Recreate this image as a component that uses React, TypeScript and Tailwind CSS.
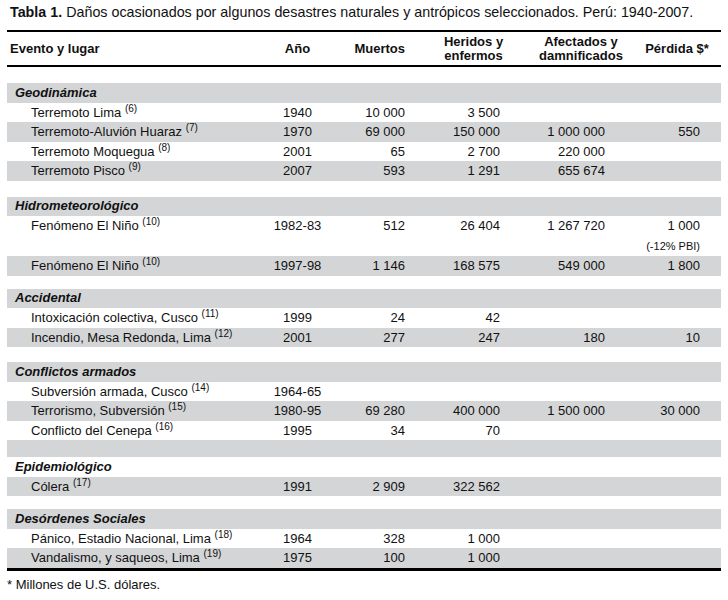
type Row = {
  kind: "section" | "item" | "gap";
  label?: string;
  note?: string;
  year?: string;
  dead?: string;
  hurt?: string;
  affected?: string;
  loss?: string;
  extra?: string;
  gray?: boolean;
  h?: string;
};

const rows: Row[] = [
  { kind: "section", label: "Geodinámica", gray: true },
  { kind: "item", label: "Terremoto Lima", note: "(6)", year: "1940", dead: "10 000", hurt: "3 500" },
  { kind: "item", label: "Terremoto-Aluvión Huaraz", note: "(7)", year: "1970", dead: "69 000", hurt: "150 000", affected: "1 000 000", loss: "550", gray: true },
  { kind: "item", label: "Terremoto Moquegua", note: "(8)", year: "2001", dead: "65", hurt: "2 700", affected: "220 000" },
  { kind: "item", label: "Terremoto Pisco", note: "(9)", year: "2007", dead: "593", hurt: "1 291", affected: "655 674", gray: true },
  { kind: "gap", h: "h-[16px]" },
  { kind: "section", label: "Hidrometeorológico", gray: true },
  { kind: "item", label: "Fenómeno El Niño", note: "(10)", year: "1982-83", dead: "512", hurt: "26 404", affected: "1 267 720", loss: "1 000", extra: "(-12% PBI)", h: "h-[40px]" },
  { kind: "item", label: "Fenómeno El Niño", note: "(10)", year: "1997-98", dead: "1 146", hurt: "168 575", affected: "549 000", loss: "1 800", gray: true },
  { kind: "gap", h: "h-[13px]" },
  { kind: "section", label: "Accidental", gray: true },
  { kind: "item", label: "Intoxicación colectiva, Cusco", note: "(11)", year: "1999", dead: "24", hurt: "42" },
  { kind: "item", label: "Incendio, Mesa Redonda, Lima", note: "(12)", year: "2001", dead: "277", hurt: "247", affected: "180", loss: "10", gray: true },
  { kind: "gap", h: "h-[15px]" },
  { kind: "section", label: "Conflictos armados", gray: true },
  { kind: "item", label: "Subversión armada, Cusco", note: "(14)", year: "1964-65" },
  { kind: "item", label: "Terrorismo, Subversión", note: "(15)", year: "1980-95", dead: "69 280", hurt: "400 000", affected: "1 500 000", loss: "30 000", gray: true },
  { kind: "item", label: "Conflicto del Cenepa", note: "(16)", year: "1995", dead: "34", hurt: "70" },
  { kind: "gap", h: "h-[17px]", gray: true },
  { kind: "section", label: "Epidemiológico" },
  { kind: "item", label: "Cólera", note: "(17)", year: "1991", dead: "2 909", hurt: "322 562", gray: true },
  { kind: "gap", h: "h-[13px]" },
  { kind: "section", label: "Desórdenes Sociales", gray: true },
  { kind: "item", label: "Pánico, Estadio Nacional, Lima", note: "(18)", year: "1964", dead: "328", hurt: "1 000" },
  { kind: "item", label: "Vandalismo, y saqueos, Lima", note: "(19)", year: "1975", dead: "100", hurt: "1 000", gray: true },
];

const cols = "grid grid-cols-[258px_65px_80px_95px_105px_111px]";

function TableRow({ r }: { r: Row }) {
  const bg = r.gray ? "bg-[#d4d5d7]" : "bg-white";
  if (r.kind === "gap") {
    return <div className={`${r.h} ${bg}`} />;
  }
  if (r.kind === "section") {
    return (
      <div className={`h-[19.5px] ${bg} flex items-center pl-[8px] font-bold italic`}>
        {r.label}
      </div>
    );
  }
  return (
    <div className={`${cols} ${r.h ?? "h-[19.5px]"} ${bg} items-start pt-[2px]`}>
      <div className="pl-[24px]">
        {r.label} <sup className="text-[10px] -top-[5px]">{r.note}</sup>
      </div>
      <div className="text-center">{r.year}</div>
      <div className="text-right pr-[5px]">{r.dead}</div>
      <div className="text-right pr-[5px]">{r.hurt}</div>
      <div className="text-right pr-[5px]">{r.affected}</div>
      <div className="text-right pr-[21px]">
        {r.loss}
        {r.extra && <div className="text-[11px] mt-[4px]">{r.extra}</div>}
      </div>
    </div>
  );
}

export default function App() {
  return (
    <div className="w-[728px] h-[600px] bg-white text-[#111] text-[13px] leading-[16px] font-['Liberation_Sans',Arial,sans-serif]">
      <p className="pl-[10px] pt-[4px] text-[14.3px] leading-[17px]">
        <span className="font-bold">Tabla 1.</span> Daños ocasionados por algunos desastres naturales y antrópicos seleccionados. Perú: 1940-2007.
      </p>

      <div className="ml-[7px] w-[714px] mt-[9px]">
        {/* cabecera */}
        <div className="border-t-2 border-b-2 border-black h-[37px] grid grid-cols-[258px_65px_95px_97px_118px_81px] items-center font-bold leading-[14px]">
          <div className="pl-[3px]">Evento y lugar</div>
          <div className="text-center">Año</div>
          <div className="text-right pr-[20px]">Muertos</div>
          <div className="text-center">
            Heridos y
            <br />
            enfermos
          </div>
          <div className="text-center">
            Afectados y
            <br />
            damnificados
          </div>
          <div className="text-center pr-[7px]">Pérdida $*</div>
        </div>

        <div className="h-[16px]" />

        {rows.map((r, i) => (
          <TableRow key={i} r={r} />
        ))}

        <div className="border-t-[3px] border-black" />
      </div>

      <p className="pl-[7px] mt-[6px]">* Millones de U.S. dólares.</p>
    </div>
  );
}
